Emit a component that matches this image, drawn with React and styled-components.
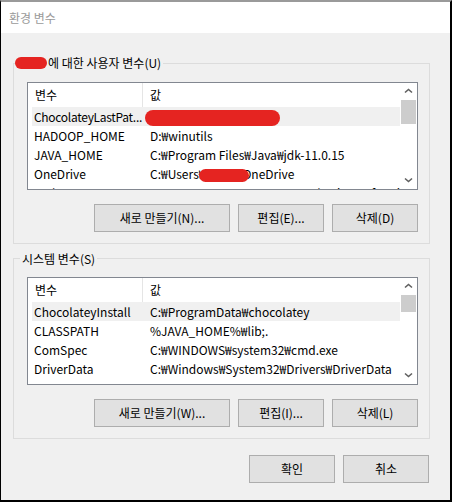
import React from 'react';
import styled, { createGlobalStyle } from 'styled-components';

const userVars = [
    { name: 'ChocolateyLastPat...', value: 'redacted', active: true, tight: true },
    { name: 'HADOOP_HOME', value: 'D:₩winutils' },
    { name: 'JAVA_HOME', value: 'C:₩Program Files₩Java₩jdk-11.0.15' },
    { name: 'OneDrive', value: 'onedrive' },
    { name: 'Path', value: 'C:₩Users₩user₩AppData₩Local₩Microsoft₩WindowsApps;' },
];

const systemVars = [
    { name: 'ChocolateyInstall', value: 'C:₩ProgramData₩chocolatey', active: true },
    { name: 'CLASSPATH', value: '%JAVA_HOME%₩lib;.' },
    { name: 'ComSpec', value: 'C:₩WINDOWS₩system32₩cmd.exe' },
    { name: 'DriverData', value: 'C:₩Windows₩System32₩Drivers₩DriverData' },
];

function Chevron({ down }) {
    return (
        <svg width="9" height="6" viewBox="0 0 9 6">
            <polyline
                points={down ? '1,1.5 4.5,4.5 8,1.5' : '1,4.5 4.5,1.5 8,4.5'}
                fill="none"
                stroke="#606060"
                strokeWidth="1.6"
            />
        </svg>
    );
}

function renderValue(value) {
    if (value === 'redacted') return <Redact w={135} h={16} ml={-5} />;
    if (value === 'onedrive') {
        return (
            <>
                C:₩Users₩<Redact w={50} h={13} ml={-6} mr={-7} />OneDrive
            </>
        );
    }
    return value;
}

function VarList({ rows, thumb }) {
    return (
        <List>
            <Table>
                <Header>
                    <HeadCell divider>변수</HeadCell>
                    <HeadCell>값</HeadCell>
                </Header>
                {rows.map((r) => (
                    <Row key={r.name} active={r.active}>
                        <NameCell tight={r.tight}>{r.name}</NameCell>
                        <ValueCell>{renderValue(r.value)}</ValueCell>
                    </Row>
                ))}
            </Table>
            <ScrollBar>
                <Arrow><Chevron /></Arrow>
                <Thumb h={thumb} />
                <Track />
                <Arrow><Chevron down /></Arrow>
            </ScrollBar>
        </List>
    );
}

export default function App() {
    return (
        <>
            <GlobalStyle />
            <Window>
                <TitleBar>환경 변수</TitleBar>
                <Body>
                    <Group>
                        <Legend>
                            <Redact w={32} h={12} ml={-7} mr={1} lift />
                            에 대한 사용자 변수(U)
                        </Legend>
                        <GroupInner>
                            <VarList rows={userVars} thumb={24} />
                            <ButtonRow>
                                <Button w={136}>새로 만들기(N)...</Button>
                                <Button w={86}>편집(E)...</Button>
                                <Button w={86}>삭제(D)</Button>
                            </ButtonRow>
                        </GroupInner>
                    </Group>

                    <Group>
                        <Legend>시스템 변수(S)</Legend>
                        <GroupInner>
                            <VarList rows={systemVars} thumb={17} />
                            <ButtonRow>
                                <Button w={136}>새로 만들기(W)...</Button>
                                <Button w={86}>편집(I)...</Button>
                                <Button w={86}>삭제(L)</Button>
                            </ButtonRow>
                        </GroupInner>
                    </Group>

                    <Footer>
                        <Button w={86}>확인</Button>
                        <Button w={86}>취소</Button>
                    </Footer>
                </Body>
            </Window>
        </>
    );
}

const GlobalStyle = createGlobalStyle`
    html, body {
        margin: 0;
        padding: 0;
        background: #fff;
    }
    body {
        font-family: "Noto Sans CJK KR", "Noto Sans", sans-serif;
        font-size: 12px;
        color: #000;
    }
    * {
        box-sizing: border-box;
    }
`;

const Window = styled.div`
    width: 452px;
    height: 502px;
    display: flex;
    flex-direction: column;
    background: #f0f0f0;
    border-top: 2px solid #9a9a9a;
    border-left: 1px solid #000;
    border-right: 2px solid #000;
    border-bottom: 2px solid #000;
`;

const TitleBar = styled.div`
    height: 31px;
    flex-shrink: 0;
    background: #fff;
    display: flex;
    align-items: center;
    padding-left: 8px;
    color: #9a9a9a;
    font-size: 12px;
`;

const Body = styled.div`
    display: flex;
    flex-direction: column;
    padding: 23px 20px 0 12px;
`;

const Group = styled.fieldset`
    margin: 0;
    padding: 0;
    min-width: 0;
    border: 1px solid #dcdcdc;

    & + & {
        margin-top: 8px;
    }
`;

const Legend = styled.legend`
    margin-left: 6px;
    padding: 0 2px;
    font-size: 12px;
    line-height: 14px;
    white-space: nowrap;
`;

const GroupInner = styled.div`
    padding: 11px 11px 11px 13px;
`;

const Redact = styled.span`
    display: inline-block;
    position: relative;
    z-index: 1;
    top: ${(p) => (p.lift ? '-2px' : '0')};
    width: ${(p) => p.w}px;
    height: ${(p) => p.h}px;
    margin-left: ${(p) => p.ml || 0}px;
    margin-right: ${(p) => p.mr || 0}px;
    border-radius: ${(p) => p.h / 2}px;
    background: #e52421;
    vertical-align: middle;
`;

const List = styled.div`
    height: 108px;
    display: flex;
    background: #fff;
    border: 1px solid #828790;
    overflow: hidden;
`;

const Table = styled.div`
    flex: 1;
    min-width: 0;
    overflow: hidden;
`;

const Header = styled.div`
    height: 24px;
    display: grid;
    grid-template-columns: 115px 1fr;
    align-items: stretch;
`;

const HeadCell = styled.div`
    display: flex;
    align-items: center;
    padding-left: 7px;
    border-right: ${(p) => (p.divider ? '1px solid #e5e5e5' : 'none')};
`;

const Row = styled.div`
    height: 19px;
    margin-left: 4px;
    display: grid;
    grid-template-columns: 111px 1fr;
    line-height: 19px;
    white-space: nowrap;
    background: ${(p) => (p.active ? '#f0f0f0' : 'transparent')};
`;

const NameCell = styled.div`
    padding-left: 2px;
    letter-spacing: ${(p) => (p.tight ? '-0.3px' : '0')};
    overflow: visible;
`;

const ValueCell = styled.div`
    padding-left: 7px;
    overflow: hidden;
`;

const ScrollBar = styled.div`
    width: 17px;
    flex-shrink: 0;
    display: flex;
    flex-direction: column;
`;

const Arrow = styled.div`
    height: 17px;
    display: flex;
    align-items: center;
    justify-content: center;
`;

const Thumb = styled.div`
    height: ${(p) => p.h}px;
    margin: 0 1px;
    background: #cdcdcd;
`;

const Track = styled.div`
    flex: 1;
`;

const ButtonRow = styled.div`
    display: flex;
    justify-content: flex-end;
    gap: 8px;
    margin-top: 14px;
`;

const Button = styled.button`
    width: ${(p) => p.w}px;
    height: 28px;
    padding: 0;
    border: 1px solid #adadad;
    border-radius: 0;
    background: #e1e1e1;
    color: #000;
    font-family: inherit;
    font-size: 12px;
`;

const Footer = styled.div`
    display: flex;
    justify-content: flex-end;
    gap: 8px;
    margin-top: 16px;
    padding-right: 1px;
`;
